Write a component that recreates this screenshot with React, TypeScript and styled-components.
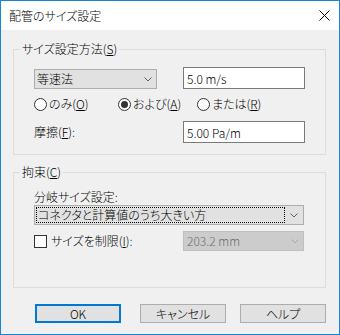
import React from 'react';
import styled, { createGlobalStyle } from 'styled-components';

const GlobalStyle = createGlobalStyle`
  html, body { margin: 0; padding: 0; background: #ffffff; }
  body {
    font-family: "Noto Sans CJK JP", "Noto Sans", sans-serif;
    font-size: 12px;
    font-weight: 300;
    color: #000;
    font-feature-settings: "palt";
  }
`;

const Window = styled.div`
  width: 340px;
  height: 335px;
  box-sizing: border-box;
  border: 1px solid #1883d7;
  display: flex;
  flex-direction: column;
  background: #f0f0f0;
`;

const TitleBar = styled.div`
  flex: none;
  height: 29px;
  background: #ffffff;
  display: flex;
  align-items: center;
  justify-content: space-between;
  padding: 0 9px 0 8px;
`;

const Title = styled.span`
  font-size: 12px;
  line-height: 16px;
`;

const Body = styled.div`
  flex: 1;
  display: flex;
  flex-direction: column;
  padding: 11px 13px 0 12px;
`;

const Group = styled.fieldset<{ $mt?: number; $pt: number; $pb: number }>`
  margin: ${(p) => p.$mt ?? 0}px 0 0 0;
  padding: ${(p) => p.$pt}px 20px ${(p) => p.$pb}px 20px;
  border: 1px solid #dcdcdc;
  min-width: 0;
`;

const Legend = styled.legend`
  padding: 0 2px;
  margin-left: -14px;
  line-height: 16px;
  font-size: 12px;
`;

const Grid2 = styled.div<{ $mt?: number; $align?: string }>`
  display: grid;
  grid-template-columns: 149px 122px;
  align-items: ${(p) => p.$align ?? 'center'};
  margin-top: ${(p) => p.$mt ?? 0}px;
`;

const DropButton = styled.div`
  width: 123px;
  height: 20px;
  box-sizing: border-box;
  border: 1px solid #adadad;
  background: #e1e1e1;
  display: flex;
  align-items: center;
  justify-content: space-between;
  padding: 0 4px 0 2px;
  line-height: 16px;
`;

const TextBox = styled.input`
  width: 122px;
  height: 22px;
  box-sizing: border-box;
  border: 1px solid #7a7a7a;
  background: #ffffff;
  padding: 0 3px;
  margin: 0;
  font-family: inherit;
  font-weight: inherit;
  font-size: 12px;
  color: #000;
  outline: none;
`;

const RadioRow = styled.div`
  display: grid;
  grid-template-columns: 84px 79px auto;
  height: 16px;
  margin-top: 7px;
  align-items: center;
`;

const RadioLabel = styled.label`
  display: flex;
  align-items: center;
  gap: 2px;
  line-height: 16px;
`;

const RadioCircle = styled.span<{ $on?: boolean }>`
  width: 13px;
  height: 13px;
  box-sizing: border-box;
  border: 1px solid #333333;
  border-radius: 50%;
  background: #ffffff;
  display: flex;
  align-items: center;
  justify-content: center;
  &::after {
    content: '';
    display: ${(p) => (p.$on ? 'block' : 'none')};
    width: 7px;
    height: 7px;
    border-radius: 50%;
    background: #333333;
  }
`;

const Label = styled.span`
  line-height: 16px;
`;

const SubLabel = styled.div`
  line-height: 16px;
`;

const Combo = styled.div`
  width: 270px;
  height: 20px;
  box-sizing: border-box;
  border: 1px solid #adadad;
  background: #e1e1e1;
  display: flex;
  align-items: center;
`;

const FocusRect = styled.div`
  flex: 1;
  height: 16px;
  margin: 0 0 0 1px;
  box-sizing: border-box;
  border: 1px dotted #000;
  padding-left: 1px;
  line-height: 14px;
  white-space: nowrap;
  overflow: hidden;
`;

const ChevronSlot = styled.div`
  width: 18px;
  display: flex;
  align-items: center;
  justify-content: center;
`;

const CheckLabel = styled.label`
  display: flex;
  align-items: center;
  gap: 4px;
  line-height: 16px;
`;

const CheckBox = styled.span`
  width: 13px;
  height: 13px;
  box-sizing: border-box;
  border: 1px solid #333333;
  background: #ffffff;
`;

const DisabledCombo = styled.div`
  width: 121px;
  height: 20px;
  box-sizing: border-box;
  border: 1px solid #bfbfbf;
  background: #cccccc;
  color: #6d6d6d;
  display: flex;
  align-items: center;
  justify-content: space-between;
  padding: 0 4px 0 3px;
  line-height: 16px;
`;

const ButtonRow = styled.div`
  display: flex;
  justify-content: flex-end;
  gap: 14px;
  margin-top: 16px;
`;

const Button = styled.div<{ $default?: boolean; $mr?: number }>`
  width: 86px;
  height: 19px;
  box-sizing: border-box;
  border: ${(p) => (p.$default ? '2px solid #0078d7' : '1px solid #adadad')};
  background: #e1e1e1;
  display: flex;
  align-items: center;
  justify-content: center;
  line-height: 14px;
  margin-right: ${(p) => p.$mr ?? 0}px;
`;

const Chevron = ({ color = '#606060' }: { color?: string }) => (
  <svg width="8" height="5" viewBox="0 0 8 5">
    <polyline points="0.5,0.5 4,4 7.5,0.5" fill="none" stroke={color} strokeWidth="1" />
  </svg>
);

const CloseIcon = () => (
  <svg width="11" height="11" viewBox="0 0 11 11">
    <path d="M0.5 0.5 L10.5 10.5 M10.5 0.5 L0.5 10.5" stroke="#000" strokeWidth="1" fill="none" />
  </svg>
);

export default function App() {
  return (
    <>
      <GlobalStyle />
      <Window>
        <TitleBar>
          <Title>配管のサイズ設定</Title>
          <CloseIcon />
        </TitleBar>
        <Body>
          <Group $pt={10} $pb={11}>
            <Legend>サイズ設定方法(<u>S</u>)</Legend>
            <Grid2 $align="end">
              <DropButton>
                <span>等速法</span>
                <Chevron />
              </DropButton>
              <TextBox readOnly value="5.0 m/s" />
            </Grid2>
            <RadioRow>
              <RadioLabel>
                <RadioCircle />
                <span>のみ(<u>O</u>)</span>
              </RadioLabel>
              <RadioLabel>
                <RadioCircle $on />
                <span>および(<u>A</u>)</span>
              </RadioLabel>
              <RadioLabel>
                <RadioCircle />
                <span>または(<u>R</u>)</span>
              </RadioLabel>
            </RadioRow>
            <Grid2 $mt={9}>
              <Label>摩擦(<u>F</u>):</Label>
              <TextBox readOnly value="5.00 Pa/m" />
            </Grid2>
          </Group>
          <Group $mt={9} $pt={9} $pb={36}>
            <Legend>拘束(<u>C</u>)</Legend>
            <SubLabel>分岐サイズ設定:</SubLabel>
            <Combo>
              <FocusRect>コネクタと計算値のうち大きい方</FocusRect>
              <ChevronSlot>
                <Chevron />
              </ChevronSlot>
            </Combo>
            <Grid2 $mt={6}>
              <CheckLabel>
                <CheckBox />
                <span>サイズを制限(<u>I</u>):</span>
              </CheckLabel>
              <DisabledCombo>
                <span>203.2 mm</span>
                <Chevron color="#a8a8a8" />
              </DisabledCombo>
            </Grid2>
          </Group>
          <ButtonRow>
            <Button $default $mr={5}>OK</Button>
            <Button>キャンセル</Button>
            <Button>ヘルプ</Button>
          </ButtonRow>
        </Body>
      </Window>
    </>
  );
}
